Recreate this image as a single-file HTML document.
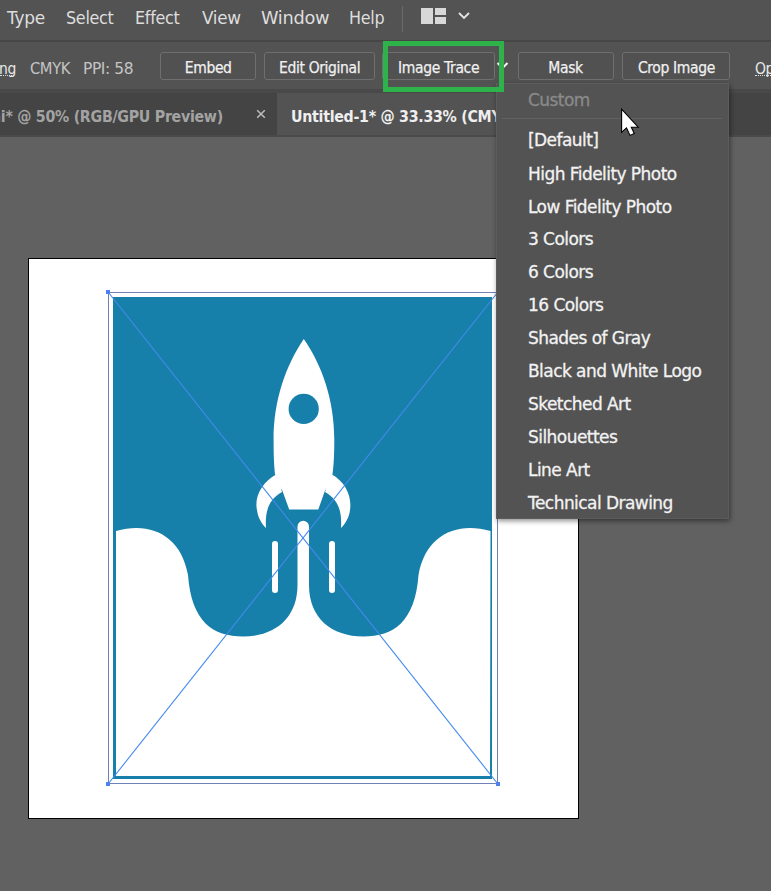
<!DOCTYPE html>
<html><head><meta charset="utf-8">
<style>
*{margin:0;padding:0;box-sizing:border-box}
html,body{width:771px;height:891px;overflow:hidden;background:#616161;font-family:"DejaVu Sans","Liberation Sans",sans-serif;}
#root{position:relative;width:771px;height:891px;overflow:hidden;background:#616161}
.abs{position:absolute;white-space:nowrap}
#menubar{left:0;top:0;width:771px;height:40px;background:#535353}
#menubar span{position:absolute;top:6.5px;font-size:17px;color:#dedede;line-height:22px;letter-spacing:-0.3px;transform-origin:0 50%;transform:scaleX(.94)}
#ctrl{left:0;top:40px;width:771px;height:53px;background:#535353;border-top:2px solid #464646;border-bottom:4px solid #494949}
#ctrl .t{position:absolute;top:16.5px;font-size:15px;color:#c4c4c4;line-height:20px;letter-spacing:-0.4px;transform-origin:0 50%;transform:scaleX(.93)}
.btn{position:absolute;top:10px;height:28px;border:1px solid #6f6f6f;border-radius:3px;color:#f0f0f0;font-size:15px;line-height:30px;text-align:center;letter-spacing:-0.4px;background:#515151}
/*TABS*/.btn b{-webkit-text-stroke:0.25px currentColor;font-weight:normal;display:inline-block;transform:scaleX(.93)}
#tabs{left:0;top:93px;width:771px;height:44px;background:#444444;border-bottom:2px solid #4a4a4a}
#tab2{left:277px;top:0;width:330px;height:42px;overflow:hidden;background:#535353}
.tabt{position:absolute;top:13.5px;font-size:15.2px;font-weight:bold;line-height:20px;letter-spacing:-0.3px;transform-origin:0 50%;transform:scaleX(.935)}
#dd{left:496px;top:83px;width:233px;height:436px;background:#535353;box-shadow:1px 2px 5px rgba(0,0,0,.45);outline:1px solid #5c5c5c;outline-offset:-1px}
#dd div{position:absolute;left:32px;font-size:17px;color:#f2f2f2;-webkit-text-stroke:0.3px currentColor;line-height:22px;letter-spacing:-0.55px}
#art{left:28px;top:258px;width:551px;height:561px;background:#fff;border:1px solid #000}
</style></head><body><div id="root">

<div id="art" class="abs"></div>

<svg class="abs" style="left:0;top:0" width="771" height="891" viewBox="0 0 771 891">
  <!-- image -->
  <rect x="113" y="297" width="379" height="482" fill="#1780aa"/>
  <!-- white bottom cloud area -->
  <path id="cloud" fill="#fff" d="M116,531 C150,521 181,535 188,575 C191.500,622 213,636.500 243,636.500 C275,636.500 297.500,618 297.500,585 L297.500,526.500 A5.750,5.750 0 0 1 309,526.500 L309,585 C309,618 331.500,636.500 363.500,636.500 C393.500,636.500 415,622 418.500,575 C425.500,535 456.500,521 490.500,531 L490,776 L116,776 Z"/>
  <!-- exhaust slits -->
  <rect x="272" y="541" width="6" height="52" rx="3" fill="#fff"/>
  <rect x="329" y="541" width="6" height="52" rx="3" fill="#fff"/>
  <!-- rocket -->
  <path fill="#fff" d="M303.800,339 C322,365 334.300,400 334.300,440 C334.300,462 333,474 331,482 L325,490.600 L318.300,509.600 L289.200,509.600 L282.300,490.600 L276.500,482 C274.500,474 273.600,462 273.600,440 C273.600,400 286,365 303.800,339 Z"/>
  <path fill="#fff" d="M277,474 C262,482 254,497 257,510 C258,518 262,524 266,528 C265,512 268,500 282,492 Z"/>
  <path fill="#fff" d="M331,474 C346,482 352,497 350,510 C349,518 345,524 341,528 C342,512 339,500 325,492 Z"/>
  <circle cx="303.700" cy="408.900" r="15.100" fill="#1780aa"/>
  <!-- selection -->
  <rect x="108.500" y="292.500" width="389" height="491" fill="none" stroke="#6e82b8" stroke-width="1"/>
  <g fill="none" stroke="#438aec" stroke-width="1.100">
    <line x1="108.500" y1="292.500" x2="497.500" y2="783.500"/>
    <line x1="497.500" y1="292.500" x2="108.500" y2="783.500"/>
  </g>
  <g fill="#4f80f0">
    <rect x="106" y="290" width="4" height="4"/>
    <rect x="106" y="782" width="4" height="4"/>
    <rect x="496" y="782" width="4" height="4"/>
  </g>
</svg>

<div id="menubar" class="abs">
  <span style="left:7px;transform:scaleX(1.0)">Type</span>
  <span style="left:66px">Select</span>
  <span style="left:135px">Effect</span>
  <span style="left:201.5px;transform:scaleX(.99)">View</span>
  <span style="left:260.5px;transform:scaleX(1.045)">Window</span>
  <span style="left:349px">Help</span>
  <i class="abs" style="left:402px;top:6px;width:1px;height:26px;background:#6a6a6a"></i>
  <svg class="abs" style="left:420px;top:7px" width="54" height="18" viewBox="0 0 54 18">
    <rect x="1" y="1" width="12" height="16" fill="#d8d8d8"/>
    <rect x="15" y="1" width="11" height="7" fill="#d8d8d8"/>
    <rect x="15" y="10" width="11" height="7" fill="#d8d8d8"/>
    <path d="M39,6 L44,11 L49,6" fill="none" stroke="#e6e6e6" stroke-width="1.800"/>
  </svg>
</div>

<div id="ctrl" class="abs">
  <span class="t" style="left:-1px;color:#e8e8e8">ng</span><i class="abs" style="left:0;top:33px;width:14px;border-top:1px dotted #ddd"></i>
  <span class="t" style="left:29.5px;transform:scaleX(.98)">CMYK</span>
  <span class="t" style="left:82.5px;transform:scaleX(1.03)">PPI: 58</span>
  <div class="btn" style="left:160px;width:96px"><b>Embed</b></div>
  <div class="btn" style="left:264px;width:111px"><b>Edit Original</b></div>
  <div class="btn" style="left:382px;width:113px"><b>Image Trace</b></div>
  <svg class="abs" style="left:496px;top:19px" width="14" height="10" viewBox="0 0 14 10"><path d="M1.500,2 L6.500,7 L11.500,2" fill="none" stroke="#f4f4f4" stroke-width="2"/></svg>
  <div class="btn" style="left:518px;width:96px"><b>Mask</b></div>
  <div class="btn" style="left:622px;width:108px"><b>Crop Image</b></div>
  <span class="t" style="left:755px;color:#e8e8e8">Op</span><i class="abs" style="left:755px;top:33px;width:16px;border-top:1px dotted #ddd"></i>
</div>

<div id="tabs" class="abs">
  <span class="tabt" style="right:548px;color:#a3a3a3;transform-origin:100% 50%">.ai* @ 50% (RGB/GPU Preview)</span>
  <svg class="abs" style="left:254.5px;top:14.5px" width="12" height="12" viewBox="0 0 12 12"><path d="M2.200,2.200 L9.800,9.800 M9.800,2.200 L2.200,9.800" stroke="#bdbdbd" stroke-width="1.500" fill="none"/></svg>
  <div id="tab2" class="abs"><span class="tabt" style="left:14px;color:#efefef">Untitled-1* @ 33.33% (CMYK</span></div>
</div>

<div id="dd" class="abs">
  <div style="top:5.6px;color:#8a8a8a">Custom</div>
  <i class="abs" style="left:6px;top:35px;width:220px;height:1px;background:#626262"></i>
  <div style="top:46.4px">[Default]</div>
  <div style="top:79.6px">High Fidelity Photo</div>
  <div style="top:112.6px">Low Fidelity Photo</div>
  <div style="top:145.1px">3 Colors</div>
  <div style="top:178.1px">6 Colors</div>
  <div style="top:211.1px">16 Colors</div>
  <div style="top:243.7px">Shades of Gray</div>
  <div style="top:276.7px">Black and White Logo</div>
  <div style="top:309.7px">Sketched Art</div>
  <div style="top:342.7px">Silhouettes</div>
  <div style="top:375.7px">Line Art</div>
  <div style="top:408.7px">Technical Drawing</div>
</div>

<!-- green highlight -->
<div class="abs" style="left:383px;top:41px;width:121px;height:51px;border:5px solid #2db34a"></div>

<!-- cursor -->
<svg class="abs" style="left:620px;top:108px" width="22" height="30" viewBox="0 0 22 30">
  <path d="M1.600,1.200 L1.600,24.300 L6.500,19.800 L10,27.400 L14.300,25.500 L11.300,19.200 L18.200,19.200 Z" fill="#fff" stroke="#000" stroke-width="1.100" stroke-linejoin="miter"/>
</svg>

</div></body></html>
